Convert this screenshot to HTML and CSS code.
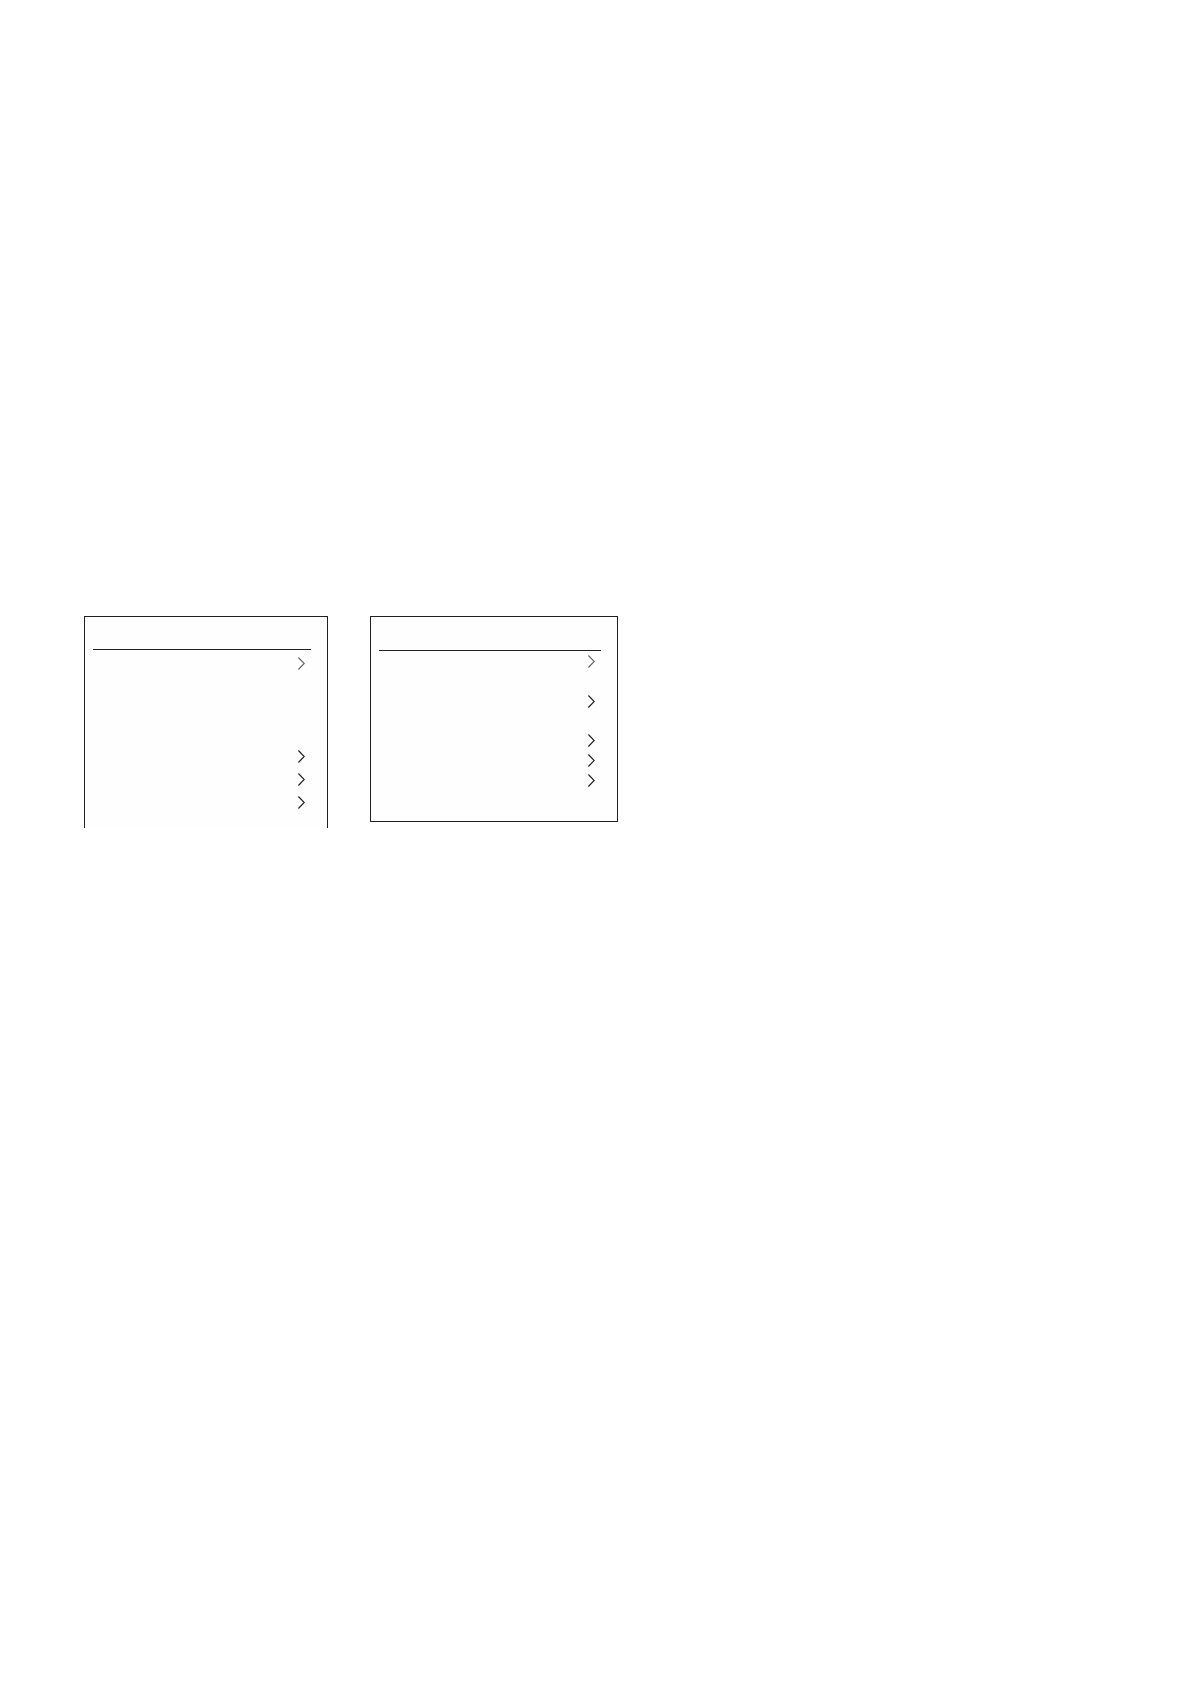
FILE: index.html
```
<!DOCTYPE html>
<html lang="en">
<head>
    <meta charset="utf-8">
    <title>Menus</title>
    <link rel="stylesheet" href="styles.css">
</head>
<body>
<svg class="defs" aria-hidden="true">
    <defs>
        <symbol id="chevron" viewBox="0 0 7 13">
            <path d="M0.4 0.5 L6.2 6.5 L0.4 12.5" fill="none" stroke="currentColor" stroke-width="1.1"/>
        </symbol>
    </defs>
</svg>
<main class="menus">
    <section class="menu menu-open">
        <header class="menu-head"></header>
        <ul class="menu-list">
            <li class="muted"><button type="button" aria-label="Open"><svg><use href="#chevron"/></svg></button></li>
            <li></li>
            <li></li>
            <li></li>
            <li><button type="button" aria-label="Open"><svg><use href="#chevron"/></svg></button></li>
            <li><button type="button" aria-label="Open"><svg><use href="#chevron"/></svg></button></li>
            <li><button type="button" aria-label="Open"><svg><use href="#chevron"/></svg></button></li>
        </ul>
    </section>
    <section class="menu menu-closed">
        <header class="menu-head"></header>
        <ul class="menu-list">
            <li class="muted"><button type="button" aria-label="Open"><svg><use href="#chevron"/></svg></button></li>
            <li></li>
            <li><button type="button" aria-label="Open"><svg><use href="#chevron"/></svg></button></li>
            <li></li>
            <li><button type="button" aria-label="Open"><svg><use href="#chevron"/></svg></button></li>
            <li><button type="button" aria-label="Open"><svg><use href="#chevron"/></svg></button></li>
            <li><button type="button" aria-label="Open"><svg><use href="#chevron"/></svg></button></li>
        </ul>
    </section>
</main>
</body>
</html>
```
FILE: styles.css
```
body {
    margin: 0;
    background: #fff;
    color: #231f20;
    font-family: "Liberation Sans", sans-serif;
}
.defs {
    display: none;
}

/* two menus on the left, the rest of the row stays empty */
.menus {
    display: grid;
    grid-template-columns: 244fr 248fr 447fr;
    align-items: start;
    gap: 42px;
    padding: 616px 84px 0;
}
.menu {
    border: 1px solid #231f20;
    background: #fefefe;
}
.menu-head {
    height: 32px;
    margin: 0 16px 0 8px;
    border-bottom: 1px solid #231f20;
}
.menu-list {
    display: flex;
    flex-direction: column;
    height: 162px;
    margin: 0;
    padding: 2px 22px 14px 8px;
    list-style: none;
}
.menu-list li {
    display: flex;
    flex: 1;
    align-items: center;
    justify-content: flex-end;
}
.muted {
    color: #666;
}
button {
    display: flex;
    padding: 0;
    border: 0;
    background: none;
    color: inherit;
    cursor: pointer;
}
button svg {
    width: 7px;
    height: 13px;
}

.menu-open {
    border-bottom: 0;
}

/* tighter rows */
.menu-closed .menu-head {
    height: 33px;
}
.menu-closed .menu-list {
    height: 138px;
    padding: 1px 22px 31px 8px;
}
```
